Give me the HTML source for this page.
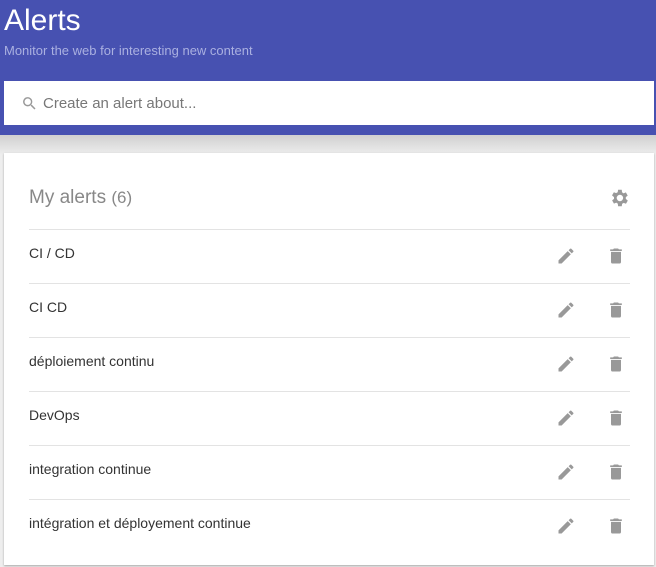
<!DOCTYPE html><html><head><style>
body{margin:0;width:656px;height:567px;overflow:hidden;background:#eeeeee;font-family:"Liberation Sans",sans-serif;position:relative}
.hd{position:absolute;left:0;top:0;width:656px;height:135px;background:#4751b1}
.t{position:absolute;left:4px;top:4px;color:#fff;font-size:30px}
.s{position:absolute;left:4px;top:43px;color:#aab0e0;font-size:13px}
.sb{position:absolute;left:4px;top:81px;width:650px;height:44px;background:#fff}
.sb span{position:absolute;left:39px;top:14px;font-size:15px;color:#777}
.sh{position:absolute;left:0;top:135px;width:656px;height:20px;background:linear-gradient(#d0d0d0,#eee)}
.card{position:absolute;left:4px;top:153px;width:650px;height:412px;background:#fff;box-shadow:0 1px 2px rgba(0,0,0,.3)}
.h{position:absolute;left:25px;top:34px;font-size:19px;color:#888}
.h small{font-size:17px}
.row{position:absolute;left:29px;width:601px;height:54px;border-top:1px solid #e3e3e3}
.row span{position:absolute;left:0;top:15px;font-size:14px;color:#333}
.row svg{position:absolute;top:16px}
</style></head><body>
<div class="hd"><div class="t">Alerts</div><div class="s">Monitor the web for interesting new content</div>
<div class="sb"><svg style="position:absolute;left:17px;top:14px" width="17" height="17" viewBox="0 0 24 24"><path fill="#999" d="M15.5 14h-.8l-.3-.3A6.5 6.5 0 1 0 9.5 16a6.5 6.5 0 0 0 4.2-1.6l.3.3v.8l5 5 1.5-1.5-5-5zm-6 0a4.5 4.5 0 1 1 0-9 4.5 4.5 0 0 1 0 9z"/></svg><span>Create an alert about...</span></div></div>
<div class="sh"></div>
<div class="card"><div class="h">My alerts <small>(6)</small></div>
<svg style="position:absolute;left:604px;top:34px" width="22" height="22" viewBox="0 0 24 24"><path fill="#999" d="M19.4 13a7.5 7.5 0 0 0 0-2l2.1-1.6-2-3.5-2.5 1a7.3 7.3 0 0 0-1.7-1L15 3h-4l-.4 2.7a7.3 7.3 0 0 0-1.7 1l-2.5-1-2 3.5L6.6 11a7.5 7.5 0 0 0 0 2l-2.1 1.6 2 3.5 2.5-1c.5.4 1.1.7 1.700 1L11 21h4l.4-2.7c.6-.3 1.2-.6 1.7-1l2.5 1 2-3.5zM13 15.5a3.5 3.5 0 1 1 0-7 3.5 3.5 0 0 1 0 7z"/></svg>
</div>
<div class="row" style="top:229px"><span>CI / CD</span><svg style="left:527px" width="20" height="20" viewBox="0 0 24 24"><path fill="#999" d="M3 17.25V21h3.75L17.8 9.94l-3.75-3.75L3 17.25zM20.7 7.04a1 1 0 0 0 0-1.41l-2.34-2.34a1 1 0 0 0-1.41 0l-1.83 1.83 3.75 3.75 1.83-1.83z"/></svg><svg style="left:577px" width="20" height="20" viewBox="0 0 24 24"><path fill="#999" d="M6 19a2 2 0 0 0 2 2h8a2 2 0 0 0 2-2V7H6v12zM19 4h-3.5l-1-1h-5l-1 1H5v2h14V4z"/></svg></div>
<div class="row" style="top:283px"><span>CI CD</span><svg style="left:527px" width="20" height="20" viewBox="0 0 24 24"><path fill="#999" d="M3 17.25V21h3.75L17.8 9.94l-3.75-3.75L3 17.25zM20.7 7.04a1 1 0 0 0 0-1.41l-2.34-2.34a1 1 0 0 0-1.41 0l-1.83 1.83 3.75 3.75 1.83-1.83z"/></svg><svg style="left:577px" width="20" height="20" viewBox="0 0 24 24"><path fill="#999" d="M6 19a2 2 0 0 0 2 2h8a2 2 0 0 0 2-2V7H6v12zM19 4h-3.5l-1-1h-5l-1 1H5v2h14V4z"/></svg></div>
<div class="row" style="top:337px"><span>déploiement continu</span><svg style="left:527px" width="20" height="20" viewBox="0 0 24 24"><path fill="#999" d="M3 17.25V21h3.75L17.8 9.94l-3.75-3.75L3 17.25zM20.7 7.04a1 1 0 0 0 0-1.41l-2.34-2.34a1 1 0 0 0-1.41 0l-1.83 1.83 3.75 3.75 1.83-1.83z"/></svg><svg style="left:577px" width="20" height="20" viewBox="0 0 24 24"><path fill="#999" d="M6 19a2 2 0 0 0 2 2h8a2 2 0 0 0 2-2V7H6v12zM19 4h-3.5l-1-1h-5l-1 1H5v2h14V4z"/></svg></div>
<div class="row" style="top:391px"><span>DevOps</span><svg style="left:527px" width="20" height="20" viewBox="0 0 24 24"><path fill="#999" d="M3 17.25V21h3.75L17.8 9.94l-3.75-3.75L3 17.25zM20.7 7.04a1 1 0 0 0 0-1.41l-2.34-2.34a1 1 0 0 0-1.41 0l-1.83 1.83 3.75 3.75 1.83-1.83z"/></svg><svg style="left:577px" width="20" height="20" viewBox="0 0 24 24"><path fill="#999" d="M6 19a2 2 0 0 0 2 2h8a2 2 0 0 0 2-2V7H6v12zM19 4h-3.5l-1-1h-5l-1 1H5v2h14V4z"/></svg></div>
<div class="row" style="top:445px"><span>integration continue</span><svg style="left:527px" width="20" height="20" viewBox="0 0 24 24"><path fill="#999" d="M3 17.25V21h3.75L17.8 9.94l-3.75-3.75L3 17.25zM20.7 7.04a1 1 0 0 0 0-1.41l-2.34-2.34a1 1 0 0 0-1.41 0l-1.83 1.83 3.75 3.75 1.83-1.83z"/></svg><svg style="left:577px" width="20" height="20" viewBox="0 0 24 24"><path fill="#999" d="M6 19a2 2 0 0 0 2 2h8a2 2 0 0 0 2-2V7H6v12zM19 4h-3.5l-1-1h-5l-1 1H5v2h14V4z"/></svg></div>
<div class="row" style="top:499px"><span>intégration et déployement continue</span><svg style="left:527px" width="20" height="20" viewBox="0 0 24 24"><path fill="#999" d="M3 17.25V21h3.75L17.8 9.94l-3.75-3.75L3 17.25zM20.7 7.04a1 1 0 0 0 0-1.41l-2.34-2.34a1 1 0 0 0-1.41 0l-1.83 1.83 3.75 3.75 1.83-1.83z"/></svg><svg style="left:577px" width="20" height="20" viewBox="0 0 24 24"><path fill="#999" d="M6 19a2 2 0 0 0 2 2h8a2 2 0 0 0 2-2V7H6v12zM19 4h-3.5l-1-1h-5l-1 1H5v2h14V4z"/></svg></div>
</body></html>
